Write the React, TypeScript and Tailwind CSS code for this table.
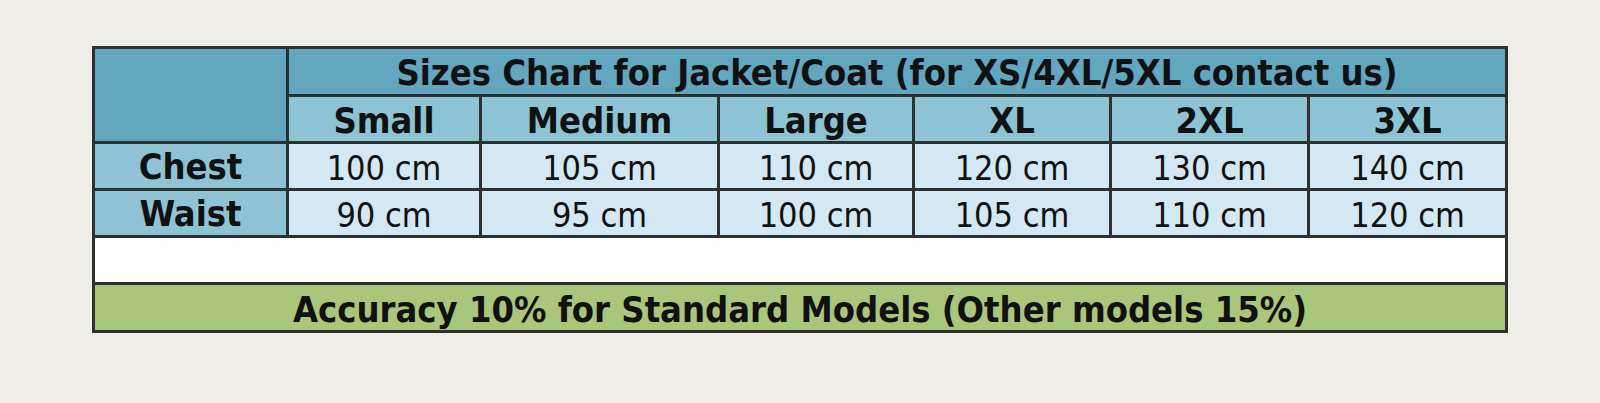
import * as React from 'react';

const sizes = ['Small', 'Medium', 'Large', 'XL', '2XL', '3XL'];
const rows = [
    { label: 'Chest', values: ['100 cm', '105 cm', '110 cm', '120 cm', '130 cm', '140 cm'] },
    { label: 'Waist', values: ['90 cm', '95 cm', '100 cm', '105 cm', '110 cm', '120 cm'] },
];
const colWidths = ['w-[194px]', 'w-[193px]', 'w-[238px]', 'w-[195px]', 'w-[197px]', 'w-[198px]', 'w-[198px]'];

export default function App() {
    return (
        <div className="w-[1600px] h-[403px] bg-[#efede8] pt-[46px] pl-[92px] font-['DejaVu_Sans_Condensed','DejaVu_Sans',sans-serif] text-[#111]">
            <table className="table-fixed border-collapse w-[1415px] border-[3px] border-[#2f2f2f]">
                <colgroup>
                    {colWidths.map((w, i) => (
                        <col key={i} className={w} />
                    ))}
                </colgroup>
                <tbody>
                    <tr className="h-[48px]">
                        <td rowSpan={2} className="border-[3px] border-[#2f2f2f] bg-[#62a6bf]"></td>
                        <td colSpan={6} className="border-[3px] border-[#2f2f2f] bg-[#62a6bf] text-center font-bold text-[36px] leading-none pt-[2px] overflow-hidden">
                            Sizes Chart for Jacket/Coat (for XS/4XL/5XL contact us)
                        </td>
                    </tr>
                    <tr className="h-[47px]">
                        {sizes.map((s) => (
                            <td key={s} className="border-[3px] border-[#2f2f2f] bg-[#8cc3d5] text-center font-bold text-[36px] leading-none pt-[4px]">
                                {s}
                            </td>
                        ))}
                    </tr>
                    {rows.map((r) => (
                        <tr key={r.label} className="h-[47px]">
                            <td className="border-[3px] border-[#2f2f2f] bg-[#8ec3d5] text-center font-bold text-[36px] leading-none pt-[2px]">
                                {r.label}
                            </td>
                            {r.values.map((v, i) => (
                                <td key={i} className="border-[3px] border-[#2f2f2f] bg-[#d3e8f3] text-center text-[34px] leading-none pt-[3px]">
                                    {v}
                                </td>
                            ))}
                        </tr>
                    ))}
                    <tr className="h-[47px]">
                        <td colSpan={7} className="border-[3px] border-[#2f2f2f] bg-white"></td>
                    </tr>
                    <tr className="h-[48px]">
                        <td colSpan={7} className="border-[3px] border-[#2f2f2f] bg-[#a9c67b] text-center font-bold text-[36px] leading-none pt-[4px]">
                            Accuracy 10% for Standard Models (Other models 15%)
                        </td>
                    </tr>
                </tbody>
            </table>
        </div>
    );
}
